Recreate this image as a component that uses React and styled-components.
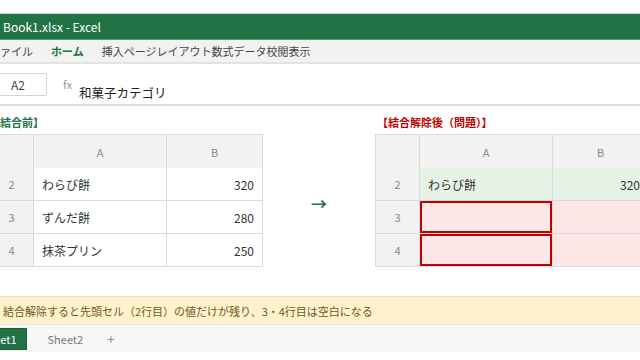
import React from 'react';
import styled, { createGlobalStyle } from 'styled-components';

const GlobalStyle = createGlobalStyle`
  html, body {
    margin: 0;
    padding: 0;
    background: #fff;
    overflow: hidden;
  }
  body {
    font-family: "Noto Sans CJK JP", "Noto Sans", sans-serif;
    color: #333;
  }
`;

const Window = styled.div`
  margin: 13px 0 0 -11px;
  width: 680px;
  border-top: 1px solid #cfd6d2;
`;

const TitleBar = styled.div`
  background: #217346;
  color: #fff;
  height: 25px;
  display: flex;
  align-items: center;
  gap: 4px;
  font-size: 12px;
  border-bottom: 1px solid #5f9b78;
`;

const AppIcon = styled.span`
  width: 10px;
  height: 10px;
  border: 1px solid #fff;
  box-sizing: border-box;
`;

const MenuBar = styled.div`
  background: #f2f2f2;
  height: 22px;
  display: flex;
  align-items: center;
  gap: 18px;
  font-size: 11px;
  color: #444;
  border-bottom: 2px solid #e3e3e3;
`;

const MenuItem = styled.span`
  color: ${p => (p.$active ? '#217346' : '#444')};
  font-weight: ${p => (p.$active ? 700 : 400)};
`;

const FormulaBar = styled.div`
  display: flex;
  align-items: flex-start;
  height: 42px;
  padding-top: 9px;
  box-sizing: border-box;
  border-bottom: 2px solid #dadada;
`;

const NameBox = styled.div`
  width: 58px;
  height: 23px;
  border: 1px solid #d4d4d4;
  border-radius: 2px;
  box-sizing: border-box;
  display: flex;
  align-items: center;
  justify-content: center;
  font-size: 12px;
  color: #444;
`;

const Fx = styled.span`
  margin-left: 16px;
  line-height: 22px;
  font-size: 11px;
  color: #999;
`;

const FormulaText = styled.span`
  margin-left: 7px;
  padding-top: 9px;
  line-height: 22px;
  font-size: 12.5px;
  color: #222;
`;

const Compare = styled.div`
  display: flex;
  padding-top: 8px;
`;

const Block = styled.div`
  display: flex;
  flex-direction: column;
`;

const Caption = styled.div`
  font-size: 11px;
  font-weight: 700;
  line-height: 16px;
  margin-bottom: 4px;
  padding-left: ${p => p.$indent || 0}px;
  color: ${p => p.$color};
`;

const Grid = styled.div`
  display: grid;
  grid-template-columns: 44px 133px 96px;
  grid-auto-rows: 33px;
  border-top: 1px solid #dadada;
  border-left: 1px solid #dadada;
  & > div:nth-child(-n + 3) {
    height: 34px;
  }
`;

const Cell = styled.div`
  box-sizing: border-box;
  border-right: 1px solid #dadada;
  border-bottom: 1px solid #dadada;
  display: flex;
  align-items: center;
  padding: 0 8px;
  font-size: 12px;
  color: #333;
  justify-content: ${p => (p.$align === 'right' ? 'flex-end' : p.$align === 'center' ? 'center' : 'flex-start')};
  background: ${p => p.$bg || '#fff'};
  ${p => p.$flag && 'box-shadow: inset 0 0 0 2px #c00000;'}
`;

const HeadCell = styled(Cell)`
  background: #f2f2f2;
  color: #888;
  font-size: 11px;
  justify-content: center;
`;

const ArrowCol = styled.div`
  width: 112px;
  display: flex;
  align-items: center;
  justify-content: center;
  padding-top: 24px;
  color: #217346;
  font-size: 16px;
  font-weight: 700;
`;

const Note = styled.div`
  margin-top: 29px;
  background: #fff2cc;
  border-top: 1px solid #f0e2b6;
  height: 27px;
  display: flex;
  align-items: center;
  gap: 3px;
  font-size: 11px;
  color: #6e5a1e;
`;

const TabBar = styled.div`
  background: #f7f7f7;
  height: 27px;
  display: flex;
  align-items: center;
  gap: 2px;
  border-top: 1px solid #e6e6e6;
  box-shadow: 0 2px 2px rgba(0, 0, 0, 0.12);
  font-size: 11px;
`;

const SheetTab = styled.div`
  height: 22px;
  display: flex;
  align-items: center;
  padding: 0 9px;
  margin-left: ${p => p.$offset || 0}px;
  background: ${p => (p.$active ? '#217346' : 'transparent')};
  color: ${p => (p.$active ? '#fff' : '#777')};
  border: 1px solid ${p => (p.$active ? '#1b5e39' : 'transparent')};
  box-sizing: border-box;
`;

const AddTab = styled.span`
  margin-left: 12px;
  color: #888;
  font-size: 13px;
`;

const Table = ({ rows }) => (
  <Grid>
    <HeadCell />
    <HeadCell>A</HeadCell>
    <HeadCell>B</HeadCell>
    {rows.map(r => (
      <React.Fragment key={r.n}>
        <HeadCell>{r.n}</HeadCell>
        <Cell $bg={r.bg} $flag={r.flag}>{r.a}</Cell>
        <Cell $bg={r.bg} $align="right">{r.b}</Cell>
      </React.Fragment>
    ))}
  </Grid>
);

const before = [
  { n: 2, a: 'わらび餅', b: '320' },
  { n: 3, a: 'ずんだ餅', b: '280' },
  { n: 4, a: '抹茶プリン', b: '250' },
];

const after = [
  { n: 2, a: 'わらび餅', b: '320', bg: '#e7f2e6' },
  { n: 3, a: '', b: '', bg: '#fde7e7', flag: true },
  { n: 4, a: '', b: '', bg: '#fde7e7', flag: true },
];

export default function App() {
  return (
    <>
      <GlobalStyle />
      <Window>
        <TitleBar>
          <AppIcon />
          <span>Book1.xlsx - Excel</span>
        </TitleBar>
        <MenuBar>
          <MenuItem>ファイル</MenuItem>
          <MenuItem $active>ホーム</MenuItem>
          <MenuItem>
            <span>挿入</span>
            <span>ページレイアウト</span>
            <span>数式</span>
            <span>データ</span>
            <span>校閲</span>
            <span>表示</span>
          </MenuItem>
        </MenuBar>
        <FormulaBar>
          <NameBox>A2</NameBox>
          <Fx>fx</Fx>
          <FormulaText>和菓子カテゴリ</FormulaText>
        </FormulaBar>
        <Compare>
          <Block>
            <Caption $color="#217346">【結合前】</Caption>
            <Table rows={before} />
          </Block>
          <ArrowCol>→</ArrowCol>
          <Block>
            <Caption $color="#c00000" $indent={2}>【結合解除後（問題）】</Caption>
            <Table rows={after} />
          </Block>
        </Compare>
        <Note>
          <span>⚠</span>
          <span>結合解除すると先頭セル（2行目）の値だけが残り、3・4行目は空白になる</span>
        </Note>
        <TabBar>
          <SheetTab $active $offset={-18}>Sheet1</SheetTab>
          <SheetTab $offset={9}>Sheet2</SheetTab>
          <AddTab>+</AddTab>
        </TabBar>
      </Window>
    </>
  );
}
